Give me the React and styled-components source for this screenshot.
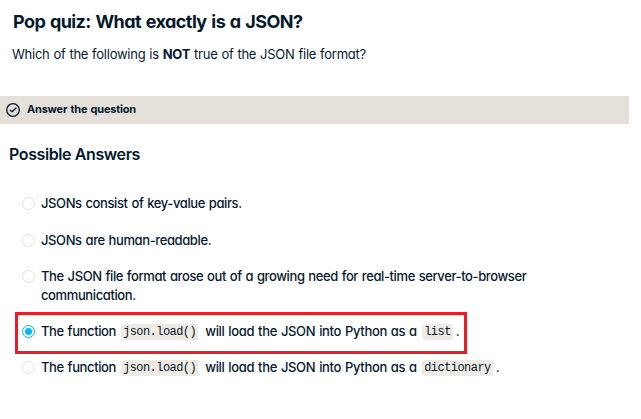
import React from "react";
import styled, { createGlobalStyle } from "styled-components";

const GlobalStyle = createGlobalStyle`
  * { box-sizing: border-box; }
  body {
    margin: 0;
    background: #fff;
    color: #05192d;
    font-family: Inter, "Noto Sans", sans-serif;
    font-feature-settings: "cv11" 1;
  }
`;

const Page = styled.main`
  width: 641px;
  height: 419px;
  overflow: hidden;
  white-space: nowrap;
`;

const Intro = styled.header`
  height: 96px;
  padding: 9px 0 0 13px;
`;

const Title = styled.h1`
  margin: 0;
  font-size: 18px;
  line-height: 25px;
  font-weight: 650;
  letter-spacing: -0.57px;
  word-spacing: 1px;
`;

const Question = styled.p`
  margin: 11px 0 0 -1px;
  font-size: 13px;
  line-height: 19px;
  letter-spacing: -0.25px;
  word-spacing: 0.5px;
`;

const Banner = styled.div`
  display: flex;
  align-items: center;
  gap: 7px;
  width: 629px;
  height: 28px;
  padding-left: 6px;
  background: #e5e1da;
  font-size: 11px;
  font-weight: 700;
  line-height: 14px;
`;

const BannerLabel = styled.span`
  margin-top: -2px;
  letter-spacing: -0.2px;
  word-spacing: 0.8px;
`;

const Heading = styled.h2`
  margin: 20px 0 0 9px;
  font-size: 16px;
  line-height: 20px;
  font-weight: 600;
  letter-spacing: -0.4px;
`;

const Answers = styled.div`
  display: flex;
  flex-direction: column;
  padding: 21px 0 0 15px;
`;

const Answer = styled.label`
  display: flex;
  gap: 6px;
  width: ${(p) => (p.$marked ? "452px" : "520px")};
  height: ${(p) => p.$height || 37}px;
  padding: ${(p) => (p.$marked ? "7px 0 0 4px" : p.$last ? "4px 0 0 7px" : "9px 0 0 7px")};
  border: ${(p) => (p.$marked ? "3px solid #ed1c24" : "0")};
  font-size: 13px;
  line-height: 19px;
  font-weight: 500;
  letter-spacing: -0.39px;
  word-spacing: 0.7px;
`;

const Radio = styled.span`
  display: flex;
  align-items: center;
  justify-content: center;
  flex: none;
  width: 13px;
  height: 13px;
  margin-top: 3px;
  border: 1px solid ${(p) => (p.$checked ? "#03b7f5" : "#e5e1da")};
  border-radius: 50%;

  &::after {
    content: "";
    width: 7px;
    height: 7px;
    border-radius: 50%;
    background: ${(p) => (p.$checked ? "#03b7f5" : "transparent")};
  }
`;

const Phrase = styled.span`
  width: ${(p) => p.$width}px;
  letter-spacing: ${(p) => p.$tracking}px;
`;

const Sentence = styled.span`
  display: flex;
`;

const Code = styled.code`
  flex: none;
  height: 16px;
  margin: 2px ${(p) => p.$after}px 0 0;
  padding: 0 2px;
  border-radius: 3px;
  background: #efebe4;
  font: 400 12px/16px "Liberation Mono", monospace;
  letter-spacing: -0.55px;
`;

const CheckIcon = () => (
  <svg width="14" height="14" viewBox="0 0 14 14" fill="none" stroke="#05192d">
    <circle cx="7" cy="7" r="6.3" strokeWidth="1.3" />
    <path d="M4.2 7.2 6 8.8 9.8 5.2" strokeWidth="1.5" strokeLinecap="round" strokeLinejoin="round" />
  </svg>
);

const FunctionSentence = ({ type }) => (
  <Sentence>
    <Phrase $width={80} $tracking={-0.38}>The function</Phrase>
    <Code $after={7}>json.load()</Code>
    <Phrase $width={217} $tracking={-0.32}>will load the JSON into Python as a</Phrase>
    <Code $after={3}>{type}</Code>
    <span>.</span>
  </Sentence>
);

export default function App() {
  return (
    <>
      <GlobalStyle />
      <Page>
        <Intro>
          <Title>Pop quiz: What exactly is a JSON?</Title>
          <Question>
            Which of the following is <b>NOT</b> true of the JSON file format?
          </Question>
        </Intro>
        <Banner>
          <CheckIcon />
          <BannerLabel>Answer the question</BannerLabel>
        </Banner>
        <Heading>Possible Answers</Heading>
        <Answers>
          <Answer>
            <Radio />
            <span>JSONs consist of key-value pairs.</span>
          </Answer>
          <Answer $height={36}>
            <Radio />
            <span>JSONs are human-readable.</span>
          </Answer>
          <Answer $height={54}>
            <Radio />
            <span>
              The JSON file format arose out of a growing need for real-time server-to-browser
              <br />
              communication.
            </span>
          </Answer>
          <Answer $marked $height={42}>
            <Radio $checked />
            <FunctionSentence type="list" />
          </Answer>
          <Answer $last>
            <Radio />
            <FunctionSentence type="dictionary" />
          </Answer>
        </Answers>
      </Page>
    </>
  );
}
